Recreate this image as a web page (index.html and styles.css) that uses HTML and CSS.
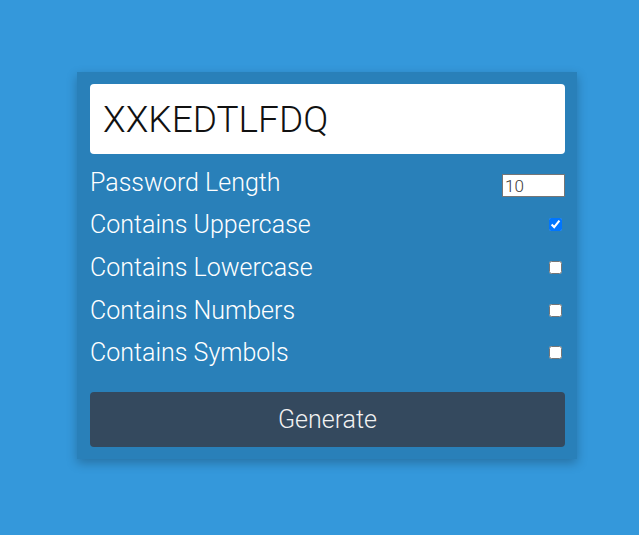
FILE: index.html
```html
<!DOCTYPE html>
<html lang="en">
<head>
<meta charset="UTF-8">
<title>Password Generator</title>
<link rel="stylesheet" href="styles.css">
</head>
<body>
<div class="card">
  <div class="result">XXKEDTLFDQ</div>
  <div class="options">
    <div class="row">
      <label>Password Length</label>
      <input class="num" type="number" value="10">
    </div>
    <div class="row">
      <label>Contains Uppercase</label>
      <input type="checkbox" checked>
    </div>
    <div class="row">
      <label>Contains Lowercase</label>
      <input type="checkbox">
    </div>
    <div class="row">
      <label>Contains Numbers</label>
      <input type="checkbox">
    </div>
    <div class="row">
      <label>Contains Symbols</label>
      <input type="checkbox">
    </div>
  </div>
  <button class="btn">Generate</button>
</div>
</body>
</html>
```

FILE: styles.css
```css
* { box-sizing: border-box; }
html, body { margin: 0; padding: 0; }
body {
  background: #3498db;
  font-family: Roboto, "Noto Sans", sans-serif;
  height: 100vh;
  display: flex;
  align-items: center;
  justify-content: center;
  padding-left: 15px;
  padding-bottom: 4px;
}
.card {
  width: 500px;
  background: #2980b9;
  padding: 12px 12px 12px 13px;
  display: flex;
  flex-direction: column;
  box-shadow: 0 4px 10px rgba(0, 0, 0, 0.25);
}
.result {
  height: 70px;
  background: #fff;
  border-radius: 4px;
  padding: 0 13px;
  display: flex;
  align-items: center;
  font-size: 37px;
  font-weight: 300;
  color: #111;
}
.options {
  margin-top: 14px;
  display: flex;
  flex-direction: column;
  gap: 14.6px;
}
.row {
  height: 28px;
  display: flex;
  align-items: center;
  justify-content: space-between;
  color: #fff;
  font-size: 25px;
  font-weight: 300;
}
.num {
  width: 63px;
  height: 23px;
  margin: 7px 0 0 0;
  padding: 0 2px;
  font-family: Roboto, sans-serif;
  font-size: 17px;
  font-weight: 300;
  color: #3a3a3a;
  border: 1px solid #767676;
  background: #fff;
}
.btn {
  margin-top: 25px;
  height: 55px;
  border: none;
  border-radius: 4px;
  background: #34495e;
  color: #f2f2f2;
  font-family: Roboto, sans-serif;
  font-size: 25px;
  font-weight: 300;
}
```
